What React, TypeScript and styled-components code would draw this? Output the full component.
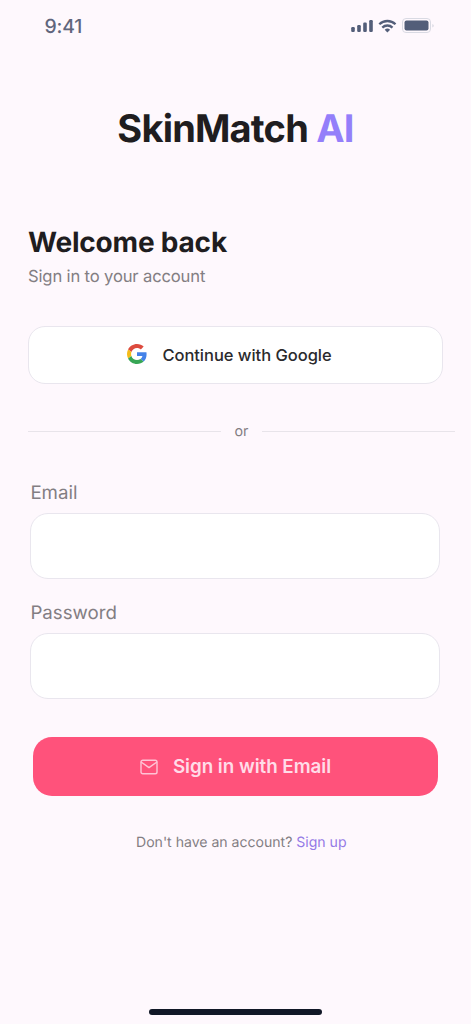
import React from "react";
import styled, { createGlobalStyle } from "styled-components";

const GlobalStyle = createGlobalStyle`
  * { box-sizing: border-box; }
  body { margin: 0; background: #fef8fd; }
`;

const Screen = styled.div`
  display: flex;
  flex-direction: column;
  width: 471px;
  height: 1024px;
  overflow: hidden;
  background: #fef8fd;
  color: #1f1d20;
  font-family: Inter, "Liberation Sans", sans-serif;
  text-rendering: geometricPrecision;
`;

const StatusBar = styled.header`
  display: flex;
  justify-content: space-between;
  align-items: center;
  height: 52px;
  padding: 0 36px 0 44.5px;
`;

const Time = styled.span`
  font-size: 19.4px;
  font-weight: 450;
  line-height: 24px;
  color: #60657c;
  letter-spacing: -0.2px;
`;

const StatusIcons = styled.svg`
  display: block;
  width: 84px;
  height: 18px;
`;

const Brand = styled.h1`
  margin: 53px 0 0;
  font-size: 38px;
  font-weight: 700;
  line-height: 48px;
  letter-spacing: -0.8px;
  text-align: center;
`;

const BrandAccent = styled.span`
  color: #947ffa;
`;

const Main = styled.main`
  display: flex;
  flex-direction: column;
  padding: 73px 28px 0;
`;

const Heading = styled.h2`
  margin: 0;
  font-size: 28px;
  font-weight: 700;
  line-height: 32px;
  letter-spacing: -0.2px;
`;

const Subheading = styled.p`
  margin: 8px 0 0;
  font-size: 16.6px;
  line-height: 22px;
  letter-spacing: -0.15px;
  color: #837e83;
`;

const Button = styled.button<{ $primary?: boolean }>`
  display: flex;
  align-items: center;
  justify-content: center;
  width: ${(p) => (p.$primary ? "405px" : "415px")};
  height: ${(p) => (p.$primary ? "59px" : "58px")};
  margin: ${(p) => (p.$primary ? "38px 0 0 5px" : "38px 0 0")};
  padding: ${(p) => (p.$primary ? "1px 0 0" : "0 12px 0 0")};
  border: ${(p) => (p.$primary ? "0" : "1px solid #e9e6ee")};
  border-radius: ${(p) => (p.$primary ? "19px" : "17px")};
  background: ${(p) => (p.$primary ? "#ff527b" : "#ffffff")};
  color: ${(p) => (p.$primary ? "#ffdce8" : "#2b2a2d")};
  font-family: inherit;
  font-size: ${(p) => (p.$primary ? "18.8px" : "16.5px")};
  font-weight: ${(p) => (p.$primary ? 600 : 500)};
  line-height: 24px;
  letter-spacing: -0.03px;
`;

const GoogleIcon = styled.svg`
  width: 20px;
  height: 20px;
  margin: -2px 15px 0 0;
`;

const MailIcon = styled.svg`
  width: 18px;
  height: 16px;
  margin: -1px 15px 0 0;
`;

const Divider = styled.div`
  display: flex;
  align-items: center;
  gap: 14px;
  width: 427px;
  height: 20px;
  margin-top: 37px;
  color: #837e83;
  font-size: 14.3px;
  line-height: 20px;

  &::before,
  &::after {
    content: "";
    flex: 1;
    height: 1px;
    background: #e8e4ea;
  }
`;

const DividerText = styled.span`
  padding-top: 2px;
`;

const Field = styled.label`
  display: flex;
  flex-direction: column;
  gap: 8px;
  margin: 0 2px 22px 2.4px;
  color: #837e83;
  font-size: 18.7px;
  line-height: 24px;
`;

const Fields = styled.div`
  display: flex;
  flex-direction: column;
  margin-top: 40px;
  margin-bottom: -22px;
`;

const Input = styled.input`
  width: 410px;
  height: 66px;
  padding: 0 20px;
  border: 1px solid #e9e6ee;
  border-radius: 18px;
  background: #ffffff;
  font: inherit;
  outline: none;
`;

const Footer = styled.p`
  margin: 37px 0 0 108px;
  color: #837e83;
  font-size: 14.1px;
  line-height: 20px;
  letter-spacing: -0.02px;
  white-space: nowrap;
`;

const SignUp = styled.a`
  margin-left: 4px;
  color: #947ae6;
`;

const HomeIndicator = styled.div`
  width: 173px;
  height: 6px;
  margin: auto auto 9px 149px;
  border-radius: 3px;
  background: #111827;
`;

export default function App() {
  return (
    <>
      <GlobalStyle />
      <Screen>
        <StatusBar>
          <Time>9:41</Time>
          <StatusIcons viewBox="0 0 84 18" fill="#535e79">
            <rect x="0.2" y="10" width="3.6" height="5" rx="1.2" />
            <rect x="6.2" y="8" width="3.6" height="7" rx="1.2" />
            <rect x="12.2" y="5.5" width="3.6" height="9.5" rx="1.2" />
            <rect x="18.2" y="3" width="3.6" height="12" rx="1.2" />
            <g fill="none" stroke="#535e79" strokeWidth="2.3">
              <path d="M28.3 7.3a11.6 11.6 0 0 1 16.2 0" />
              <path d="M31.3 10.6a7.3 7.3 0 0 1 10.2 0" />
            </g>
            <path d="M33.7 12.7a4 4 0 0 1 5.4 0L36.4 15.5z" />
            <rect x="51.5" y="1.5" width="28" height="14" rx="3.5" fill="none" stroke="#d9dae3" />
            <rect x="53.5" y="3.5" width="24" height="10" rx="2" />
            <path d="M81.3 7v3.5q1.5-.5 1.5-1.75T81.3 7z" fill="#d9dae3" />
          </StatusIcons>
        </StatusBar>
        <Brand>
          SkinMatch <BrandAccent>AI</BrandAccent>
        </Brand>
        <Main>
          <Heading>Welcome back</Heading>
          <Subheading>Sign in to your account</Subheading>
          <Button type="button">
            <GoogleIcon viewBox="0 0 48 48">
              <path fill="#dd4b3e" d="M24 9.5c3.54 0 6.71 1.22 9.21 3.6l6.85-6.85C35.9 2.38 30.47 0 24 0 14.62 0 6.51 5.38 2.56 13.22l7.98 6.19C12.43 13.72 17.74 9.5 24 9.5z" />
              <path fill="#4482e8" d="M46.98 24.55c0-1.57-.15-3.09-.38-4.55H24v9.02h12.94c-.58 2.96-2.26 5.48-4.78 7.18l7.73 6c4.51-4.18 7.09-10.36 7.09-17.65z" />
              <path fill="#f5bc18" d="M10.53 28.59c-.48-1.45-.76-2.99-.76-4.59s.27-3.14.76-4.59l-7.98-6.19C.92 16.46 0 20.12 0 24c0 3.88.92 7.54 2.56 10.78l7.97-6.19z" />
              <path fill="#37a655" d="M24 48c6.48 0 11.93-2.13 15.89-5.81l-7.73-6c-2.15 1.45-4.92 2.3-8.16 2.3-6.26 0-11.57-4.22-13.47-9.91l-7.98 6.19C6.51 42.62 14.62 48 24 48z" />
            </GoogleIcon>
            Continue with Google
          </Button>
          <Divider>
            <DividerText>or</DividerText>
          </Divider>
          <Fields>
            <Field>
              Email
              <Input type="email" />
            </Field>
            <Field>
              Password
              <Input type="password" />
            </Field>
          </Fields>
          <Button type="button" $primary>
            <MailIcon viewBox="0 0 18 16" fill="none" stroke="#ffc3d5" strokeWidth="1.4" strokeLinejoin="round" strokeLinecap="round">
              <rect x="1" y="1.2" width="16" height="13.6" rx="1.8" />
              <path d="M1.4 3.2L9 8.6l7.6-5.4" />
            </MailIcon>
            Sign in with Email
          </Button>
          <Footer>
            Don't have an account?<SignUp>Sign up</SignUp>
          </Footer>
        </Main>
        <HomeIndicator />
      </Screen>
    </>
  );
}
